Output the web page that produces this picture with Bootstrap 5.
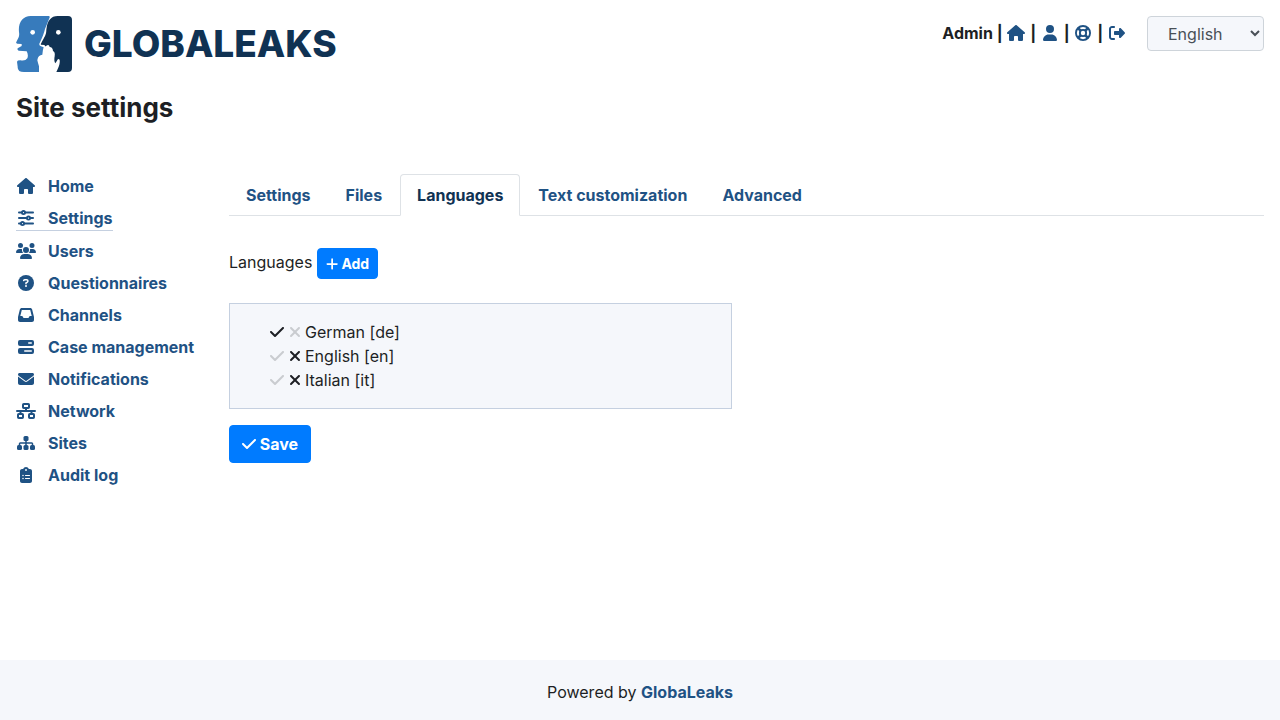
<!DOCTYPE html>
<html lang="en">
<head>
<meta charset="utf-8">
<meta name="viewport" content="width=device-width, initial-scale=1">
<title>Site settings - GlobaLeaks</title>
<link href="https://cdn.jsdelivr.net/npm/bootstrap@5.3.0/dist/css/bootstrap.min.css" rel="stylesheet">
<style>
body { font-family: Inter, "Liberation Sans", sans-serif; font-size: 16px; line-height: 24px; color: #1d1f24; }
a { color: #1f5284; font-weight: 700; text-decoration: none; }
.fa { height: 16px; width: auto; fill: currentColor; vertical-align: -2px; overflow: visible; }
.fa-line { fill: none; stroke: currentColor; stroke-width: 60; stroke-linecap: round; stroke-linejoin: round; }
.gl-row { --bs-gutter-x: 30px; }
.gl-brand { color: #103253; font-size: 37px; line-height: 56px; font-weight: 800; gap: 12px; }
.gl-brand:hover { color: #103253; }
.gl-user { font-weight: 700; line-height: 34px; }
.gl-user a { display: inline-block; width: 20px; text-align: center; }
.gl-lang { width: 117px; height: 35px; margin-left: 20px; padding: 0 0 0 16px; color: #495057; background: #f5f7fb; border: 1px solid #ced4da; border-radius: 4px; }
.gl-title { font-size: 26px; line-height: 32px; font-weight: 700; margin: 20px 0 50px; }
.gl-side { gap: 8px; }
.gl-side a { display: flex; gap: 12px; }
.gl-side a.active { border-bottom: 1px solid #c5d0e0; }
.gl-ico { width: 20px; display: flex; justify-content: center; align-items: center; }
.nav-tabs { --bs-nav-tabs-border-radius: 4px; --bs-nav-link-font-weight: 700; --bs-nav-link-color: #1f5284; --bs-nav-link-hover-color: #1f5284; --bs-nav-tabs-link-active-color: #103253; }
.nav-tabs .nav-item + .nav-item { margin-left: 1px; }
.btn-primary { --bs-btn-bg: #007bff; --bs-btn-border-color: #007bff; --bs-btn-border-radius: 4px; font-weight: 700; }
.btn-sm { font-size: 14px; line-height: 21px; }
.btn-sm .fa { height: 14px; }
.gl-box { background: #f5f7fb; border: 1px solid #c5d0e0; }
.gl-box ul { padding-left: 40px; }
.gl-mark { color: inherit; background: none; border: 0; padding: 0; }
.gl-mark:disabled { color: #212529; opacity: .2; }
.gl-foot { background: #f5f7fb; padding: 20px 0 16px; }
</style>
</head>
<body class="d-flex flex-column min-vh-100">
<svg class="d-none" aria-hidden="true">
  <symbol id="house" viewBox="0 0 576 512"><path d="M575.8 255.5c0 18-15 32.1-32 32.1h-32l.7 160.2c0 2.7-.2 5.4-.5 8.1V472c0 22.1-17.9 40-40 40H392c-22.1 0-40-17.9-40-40V384c0-17.7-14.3-32-32-32H256c-17.7 0-32 14.3-32 32v88c0 22.1-17.9 40-40 40H104c-22.1 0-40-17.9-40-40V287.6H32c-18 0-32-14-32-32.1c0-9 3-17 10-24L266.4 8c7-7 15-8 22-8s15 2 21 7L564.8 231.5c8 7 12 15 11 24z"/></symbol>
  <symbol id="check" viewBox="0 0 448 512"><path d="M438.6 105.4c12.5 12.5 12.5 32.8 0 45.3l-256 256c-12.5 12.5-32.8 12.5-45.3 0l-128-128c-12.5-12.5-12.5-32.8 0-45.3s32.8-12.5 45.3 0L160 338.7 393.4 105.4c12.5-12.5 32.8-12.5 45.3 0z"/></symbol>
  <symbol id="xmark" viewBox="0 0 384 512"><path d="M342.6 150.6c12.5-12.5 12.5-32.8 0-45.3s-32.8-12.5-45.3 0L192 210.7 86.6 105.4c-12.5-12.5-32.8-12.5-45.3 0s-12.5 32.8 0 45.3L146.7 256 41.4 361.4c-12.5 12.5-12.5 32.8 0 45.3s32.8 12.5 45.3 0L192 301.3 297.4 406.6c12.5 12.5 32.8 12.5 45.3 0s12.5-32.8 0-45.3L237.3 256 342.6 150.6z"/></symbol>
</svg>

<div class="flex-grow-1 px-3 pt-3">
  <header class="d-flex justify-content-between align-items-start">
    <a href="#" class="gl-brand d-flex">
      <svg width="56" height="56" viewBox="18 18 168 168" aria-hidden="true">
        <path fill="#377bbc" d="M62 18H116Q121 18 118 25L105 57Q101 75 88 101Q87 106 93 109L101 112Q98 120 97 134Q85 136 83 146L82 151Q84 160 87 169V186H42Q22 186 23 170L21 155Q22 151 31 151Q46 154 52 145Q56 134 50 124Q38 123 26 122Q21 120 23 115L35 108L35 102L22 101Q17 100 19 96C26 82 29 79 27 66C24 38 38 18 62 18Z"/>
        <path fill="#103253" d="M143 18H174Q186 18 186 30V174Q186 186 174 186H139C144 176 151 162 149 150Q145 143 140 154L136 160Q131 153 134 139Q136 126 129 123Q128 111 119 111Q117 101 109 107Q104 111 104 105L93 104Q91 103 94 99C104 79 109 75 109 59Q113 18 143 18Z"/>
        <circle cx="68" cy="67" r="7" fill="#fff"/><circle cx="145" cy="67" r="7" fill="#fff"/>
      </svg>
      <span>GLOBALEAKS</span>
    </a>
    <div class="d-flex">
      <div class="gl-user">
        Admin |
        <a href="#" aria-label="Home"><svg class="fa" viewBox="0 0 576 512"><use href="#house"/></svg></a> |
        <a href="#" aria-label="Preferences"><svg class="fa" viewBox="0 0 448 512"><path d="M224 256A128 128 0 1 0 224 0a128 128 0 1 0 0 256zm-45.7 48C79.8 304 0 383.8 0 482.3C0 498.7 13.3 512 29.7 512H418.3c16.4 0 29.7-13.3 29.7-29.7C448 383.8 368.2 304 269.7 304H178.3z"/></svg></a> |
        <a href="#" aria-label="Support"><svg class="fa fa-line" viewBox="0 0 512 512"><circle cx="256" cy="256" r="226"/><circle cx="256" cy="256" r="100"/><g stroke-width="84" stroke-linecap="butt"><path d="M98 98l86 86M414 98l-86 86M98 414l86-86M414 414l-86-86"/></g></svg></a> |
        <a href="#" aria-label="Log out"><svg class="fa" viewBox="0 0 512 512"><path d="M377.9 105.9L500.7 228.7c7.2 7.2 11.3 17.1 11.3 27.3s-4.1 20.1-11.3 27.3L377.9 406.1c-6.4 6.4-15 9.9-24 9.9c-18.7 0-33.9-15.2-33.9-33.9v-62.1H192c-17.7 0-32-14.3-32-32v-64c0-17.7 14.3-32 32-32h128v-62.1c0-18.7 15.2-33.9 33.9-33.9c9 0 17.6 3.6 24 9.9zM160 96H96c-17.7 0-32 14.3-32 32v256c0 17.7 14.3 32 32 32h64c17.7 0 32 14.3 32 32s-14.3 32-32 32H96c-53 0-96-43-96-96V128C0 75 43 32 96 32h64c17.7 0 32 14.3 32 32s-14.3 32-32 32z"/></svg></a>
      </div>
      <select class="gl-lang" aria-label="Language"><option>English</option><option>Deutsch</option><option>Italiano</option></select>
    </div>
  </header>

  <h1 class="gl-title">Site settings</h1>

  <div class="row gl-row">
    <div class="col-2">
      <nav class="gl-side d-flex flex-column align-items-start text-nowrap" aria-label="Administration">
        <a href="#"><span class="gl-ico"><svg class="fa" viewBox="0 0 576 512"><use href="#house"/></svg></span>Home</a>
        <a href="#" class="active"><span class="gl-ico"><svg class="fa fa-line" viewBox="0 0 512 512"><path d="M30 80H120M232 80H482M30 256H280M392 256H482M30 432H88M200 432H482"/><circle cx="176" cy="80" r="50"/><circle cx="336" cy="256" r="50"/><circle cx="144" cy="432" r="50"/></svg></span>Settings</a>
        <a href="#"><span class="gl-ico"><svg class="fa" viewBox="0 0 640 512"><path d="M144 0a80 80 0 1 1 0 160A80 80 0 1 1 144 0zM512 0a80 80 0 1 1 0 160A80 80 0 1 1 512 0zM0 298.7C0 239.8 47.8 192 106.7 192h42.7c15.9 0 31 3.5 44.6 9.7c-1.3 7.2-1.9 14.7-1.9 22.3c0 38.2 16.8 72.5 43.3 96H21.3C9.6 320 0 310.4 0 298.7zM405.3 320c26.6-23.5 43.3-57.8 43.3-96c0-7.6-.7-15-1.9-22.3c13.6-6.3 28.7-9.7 44.6-9.7h42.7C592.2 192 640 239.8 640 298.7c0 11.8-9.6 21.3-21.3 21.3H405.3zM224 224a96 96 0 1 1 192 0 96 96 0 1 1 -192 0zM128 485.3C128 411.7 187.7 352 261.3 352H378.7C452.3 352 512 411.7 512 485.3c0 14.7-11.9 26.7-26.7 26.7H154.7c-14.7 0-26.7-11.9-26.7-26.7z"/></svg></span>Users</a>
        <a href="#"><span class="gl-ico"><svg class="fa" viewBox="0 0 512 512"><circle cx="256" cy="256" r="256"/><path d="M182 178Q192 152 222 152H278Q318 154 318 192Q318 218 292 233L256 254V278" fill="none" stroke="#fff" stroke-width="48" stroke-linecap="round"/><circle cx="256" cy="352" r="32" fill="#fff"/></svg></span>Questionnaires</a>
        <a href="#"><span class="gl-ico"><svg class="fa" viewBox="0 0 512 512"><path fill-rule="evenodd" d="M121 32C91.600 32 66 52 58.900 80.500L1.900 308.400C.6 313.500 0 318.700 0 323.900V416c0 35.300 28.700 64 64 64H448c35.300 0 64-28.700 64-64V323.900c0-5.200-.6-10.400-1.900-15.500l-57-227.900C446 52 420.400 32 391 32H121zm0 64H391l48 192H387.800c-12.100 0-23.200 6.800-28.600 17.700l-14.300 28.600c-5.400 10.800-16.500 17.700-28.600 17.700H195.800c-12.100 0-23.200-6.800-28.600-17.700l-14.300-28.600c-5.400-10.800-16.500-17.700-28.600-17.700H73L121 96z"/></svg></span>Channels</a>
        <a href="#"><span class="gl-ico"><svg class="fa" viewBox="0 0 512 512"><rect y="32" width="512" height="192" rx="64"/><rect y="288" width="512" height="192" rx="64"/><path d="M344 128H424M216 384H424" stroke="#fff" stroke-width="48" stroke-linecap="round"/></svg></span>Case management</a>
        <a href="#"><span class="gl-ico"><svg class="fa" viewBox="0 0 512 512"><path d="M48 64C21.500 64 0 85.500 0 112c0 15.100 7.100 29.300 19.200 38.400L236.800 313.600c11.400 8.500 27 8.500 38.400 0L492.800 150.400c12.100-9.100 19.200-23.300 19.200-38.400c0-26.500-21.500-48-48-48H48zM0 176V384c0 35.300 28.700 64 64 64H448c35.300 0 64-28.700 64-64V176L294.400 339.200c-22.800 17.100-54 17.100-76.800 0L0 176z"/></svg></span>Notifications</a>
        <a href="#"><span class="gl-ico"><svg class="fa fa-line" viewBox="0 0 640 512"><g stroke-width="64"><rect x="224" y="32" width="192" height="128" rx="24"/><rect x="64" y="352" width="160" height="128" rx="24"/><rect x="416" y="352" width="160" height="128" rx="24"/><path d="M32 256H608M320 163V256M144 256V349M496 256V349"/></g></svg></span>Network</a>
        <a href="#"><span class="gl-ico"><svg class="fa" viewBox="0 0 576 512"><rect x="208" y="32" width="160" height="160" rx="48"/><rect y="320" width="160" height="160" rx="48"/><rect x="208" y="320" width="160" height="160" rx="48"/><rect x="416" y="320" width="160" height="160" rx="48"/><path d="M288 180V330M80 330V280Q80 256 104 256H472Q496 256 496 280V330" fill="none" stroke="currentColor" stroke-width="48"/></svg></span>Sites</a>
        <a href="#"><span class="gl-ico"><svg class="fa" viewBox="0 0 384 512"><path d="M192 0c-41.800 0-77.400 26.700-90.500 64H64C28.700 64 0 92.700 0 128V448c0 35.300 28.700 64 64 64H320c35.300 0 64-28.700 64-64V128c0-35.300-28.700-64-64-64H282.500C269.400 26.700 233.800 0 192 0z"/><circle cx="192" cy="96" r="30" fill="#fff"/><circle cx="96" cy="272" r="25" fill="#fff"/><circle cx="96" cy="368" r="25" fill="#fff"/><path d="M176 272H304M176 368H304" stroke="#fff" stroke-width="34" stroke-linecap="round"/></svg></span>Audit log</a>
      </nav>
    </div>
    <main class="col-10">
      <ul class="nav nav-tabs">
        <li class="nav-item"><a class="nav-link" href="#">Settings</a></li>
        <li class="nav-item"><a class="nav-link" href="#">Files</a></li>
        <li class="nav-item"><a class="nav-link active" aria-current="page" href="#">Languages</a></li>
        <li class="nav-item"><a class="nav-link" href="#">Text customization</a></li>
        <li class="nav-item"><a class="nav-link" href="#">Advanced</a></li>
      </ul>
      <div class="mt-4 pt-2 mb-4">
        <span>Languages</span>
        <button type="button" class="btn btn-primary btn-sm"><svg class="fa" viewBox="0 0 448 512"><path d="M256 80c0-17.700-14.300-32-32-32s-32 14.300-32 32V224H48c-17.700 0-32 14.300-32 32s14.300 32 32 32H192V432c0 17.700 14.300 32 32 32s32-14.300 32-32V288H400c17.700 0 32-14.300 32-32s-14.300-32-32-32H256V80z"/></svg> Add</button>
      </div>
      <div class="row gl-row">
        <div class="col-6">
          <div class="gl-box py-3">
            <ul class="list-unstyled mb-0">
              <li><button class="gl-mark" aria-label="Default language"><svg class="fa" viewBox="0 0 448 512"><use href="#check"/></svg></button> <button class="gl-mark" disabled aria-label="Remove German"><svg class="fa" viewBox="0 0 384 512"><use href="#xmark"/></svg></button> German [de]</li>
              <li><button class="gl-mark" disabled aria-label="Make English default"><svg class="fa" viewBox="0 0 448 512"><use href="#check"/></svg></button> <button class="gl-mark" aria-label="Remove English"><svg class="fa" viewBox="0 0 384 512"><use href="#xmark"/></svg></button> English [en]</li>
              <li><button class="gl-mark" disabled aria-label="Make Italian default"><svg class="fa" viewBox="0 0 448 512"><use href="#check"/></svg></button> <button class="gl-mark" aria-label="Remove Italian"><svg class="fa" viewBox="0 0 384 512"><use href="#xmark"/></svg></button> Italian [it]</li>
            </ul>
          </div>
        </div>
      </div>
      <button type="button" class="btn btn-primary mt-3"><svg class="fa" viewBox="0 0 448 512"><use href="#check"/></svg> Save</button>
    </main>
  </div>
</div>
<footer class="gl-foot text-center">Powered by <a href="#">GlobaLeaks</a></footer>
<script src="https://cdn.jsdelivr.net/npm/bootstrap@5.3.0/dist/js/bootstrap.bundle.min.js"></script>
</body>
</html>
